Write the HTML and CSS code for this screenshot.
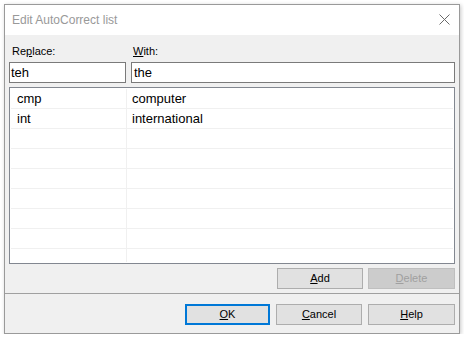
FILE: index.html
```html
<!DOCTYPE html>
<html>
<head>
<meta charset="utf-8">
<link rel="stylesheet" href="styles.css">
</head>
<body>
<div class="window">
  <div class="titlebar">
    <span class="title">Edit AutoCorrect list</span>
    <svg class="close" width="11" height="11" viewBox="0 0 11 11"><path d="M0.5 0.5 L10.5 10.5 M10.5 0.5 L0.5 10.5" stroke="#6a6a6a" stroke-width="1" fill="none"/></svg>
  </div>
  <div class="body">
    <div class="fields">
      <div class="field">
        <div class="label">Re<u>p</u>lace:</div>
        <div class="input">teh</div>
      </div>
      <div class="field">
        <div class="label"><u>W</u>ith:</div>
        <div class="input">the</div>
      </div>
    </div>
    <div class="list">
      <div class="grid">
        <div class="cell c1">cmp</div><div class="cell c2">computer</div>
        <div class="cell c1">int</div><div class="cell c2">international</div>
        <div class="cell c1"></div><div class="cell c2"></div>
        <div class="cell c1"></div><div class="cell c2"></div>
        <div class="cell c1"></div><div class="cell c2"></div>
        <div class="cell c1"></div><div class="cell c2"></div>
        <div class="cell c1"></div><div class="cell c2"></div>
        <div class="cell c1"></div><div class="cell c2"></div>
        <div class="cell c1"></div><div class="cell c2"></div>
      </div>
    </div>
    <div class="actions">
      <div class="btn"><u>A</u>dd</div>
      <div class="btn wide disabled"><u>D</u>elete</div>
    </div>
  </div>
  <div class="sep"></div>
  <div class="footer">
    <div class="btn ok default"><u>O</u>K</div>
    <div class="btn"><u>C</u>ancel</div>
    <div class="btn wide"><u>H</u>elp</div>
  </div>
</div>
</body>
</html>
```
FILE: styles.css
```css
html, body {
  margin: 0;
  padding: 0;
  background: #ffffff;
}
body {
  font-family: "Liberation Sans", Arial, sans-serif;
  color: #000;
}
.window {
  margin: 4px 0 0 4px;
  width: 456px;
  height: 330px;
  box-sizing: border-box;
  border: 1px solid #9a9a9a;
  background: #f0f0f0;
  box-shadow: 1px 1px 4px rgba(0, 0, 0, 0.22);
  display: flex;
  flex-direction: column;
}
.titlebar {
  height: 30px;
  background: #ffffff;
  display: flex;
  align-items: center;
  justify-content: space-between;
  padding: 0 9px 0 7px;
}
.title {
  font-size: 12px;
  color: #999999;
  line-height: 30px;
}
.close {
  display: block;
  margin-top: -1px;
}
.body {
  padding: 10px 4px 4px 4px;
}
.fields {
  display: grid;
  grid-template-columns: 117px 1fr;
  column-gap: 5px;
}
.label {
  font-size: 11px;
  line-height: 13px;
  height: 13px;
  padding-left: 3px;
  margin-bottom: 4px;
}
.field:nth-child(2) .label {
  padding-left: 2px;
}
.input {
  height: 21px;
  box-sizing: border-box;
  border: 1px solid #7a7a7a;
  background: #ffffff;
  font-size: 13px;
  line-height: 19px;
  padding: 0 2px 0 1px;
}
.field:nth-child(2) .input {
  padding-left: 2px;
}
.list {
  margin-top: 4px;
  height: 177px;
  box-sizing: border-box;
  border: 1px solid #828790;
  background: #ffffff;
  padding: 1px;
  overflow: hidden;
}
.grid {
  display: grid;
  grid-template-columns: 116px 1fr;
  grid-auto-rows: 20px;
  height: 173px;
  overflow: hidden;
}
.cell {
  font-size: 13px;
  line-height: 19px;
  border-bottom: 1px solid #f0f0f0;
  white-space: nowrap;
}
.c1 {
  border-right: 1px solid #f0f0f0;
  padding-left: 6px;
}
.c2 {
  padding-left: 5px;
}
.actions {
  margin-top: 4px;
  display: flex;
  justify-content: flex-end;
  gap: 5px;
}
.btn {
  width: 86px;
  height: 21px;
  box-sizing: border-box;
  border: 1px solid #adadad;
  background: #e1e1e1;
  font-size: 11px;
  line-height: 19px;
  text-align: center;
  color: #000;
}
.btn.wide {
  width: 87px;
}
.btn.ok {
  width: 85px;
}
.btn.disabled {
  background: #cccccc;
  border-color: #bfbfbf;
  color: #a0a0a0;
}
.btn.default {
  border: 2px solid #0078d7;
  line-height: 17px;
}
.sep {
  height: 1px;
  background: #a0a0a0;
}
.footer {
  display: flex;
  justify-content: flex-end;
  gap: 6px;
  padding: 10px 4px 8px 4px;
}
```
